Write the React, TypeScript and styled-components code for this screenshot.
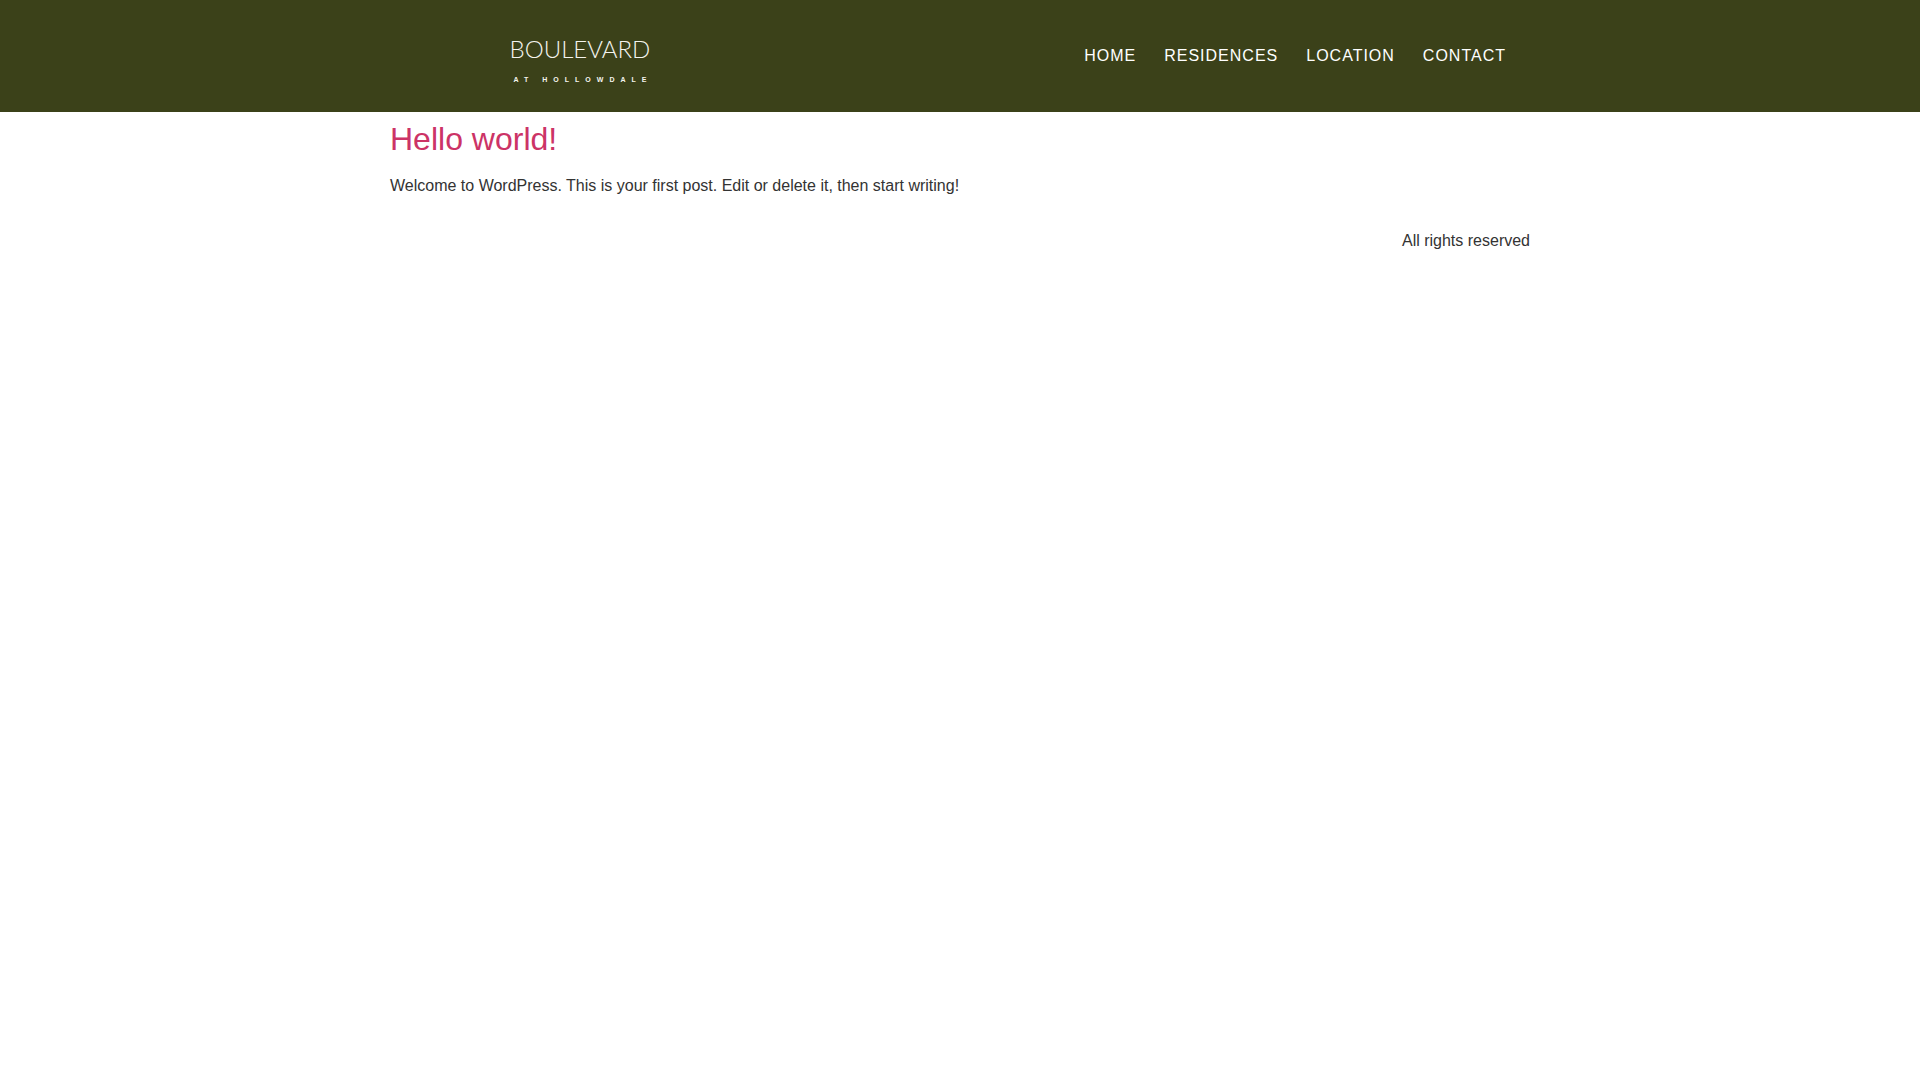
import React from "react";
import styled, { createGlobalStyle } from "styled-components";

const GlobalStyle = createGlobalStyle`
  *, *::before, *::after { box-sizing: border-box; }
  body {
    margin: 0;
    background: #fff;
    color: #333;
    font-family: "Liberation Sans", Arial, sans-serif;
    font-size: 16px;
    line-height: 24px;
  }
`;

const Header = styled.header`
  background: #3b4119;
`;

const HeaderInner = styled.div`
  display: grid;
  grid-template-columns: 1fr 2fr;
  align-items: center;
  max-width: 1140px;
  min-height: 112px;
  margin: 0 auto;
`;

const Logo = styled.a`
  display: flex;
  flex-direction: column;
  align-items: center;
  gap: 4px;
  justify-self: center;
  color: #f4f4ee;
  text-decoration: none;
  white-space: nowrap;
`;

const LogoName = styled.span`
  font-family: Lato, "Liberation Sans", sans-serif;
  font-size: 24px;
  font-weight: 300;
  line-height: 44px;
`;

const LogoTagline = styled.span`
  padding-left: 6px;
  font-size: 7px;
  font-weight: 700;
  line-height: 10px;
  letter-spacing: 6px;
`;

const Nav = styled.nav`
  display: flex;
  flex-wrap: wrap;
  justify-content: flex-end;
  padding: 0 10px;
`;

const NavLink = styled.a`
  padding: 12px 14px;
  color: #fff;
  letter-spacing: 1px;
  line-height: 24px;
  text-decoration: none;
  text-transform: uppercase;
`;

const Main = styled.main`
  max-width: 1140px;
  margin: 0 auto;
  padding-top: 8px;
`;

const PostTitle = styled.h2`
  margin: 0 0 16px;
  font-size: 32px;
  font-weight: 500;
  line-height: 38px;
`;

const PostLink = styled.a`
  color: #cc3366;
  text-decoration: none;
`;

const Excerpt = styled.p`
  margin: 0 0 15px;
`;

const Footer = styled.footer`
  display: flex;
  justify-content: flex-end;
  max-width: 1140px;
  margin: 0 auto;
  padding: 16px 0;
`;

const links = ["Home", "Residences", "Location", "Contact"];

export default function App() {
  return (
    <>
      <GlobalStyle />
      <Header>
        <HeaderInner>
          <Logo href="#">
            <LogoName>BOULEVARD</LogoName>
            <LogoTagline>AT HOLLOWDALE</LogoTagline>
          </Logo>
          <Nav aria-label="Main">
            {links.map((label) => (
              <NavLink key={label} href={`#${label.toLowerCase()}`}>
                {label}
              </NavLink>
            ))}
          </Nav>
        </HeaderInner>
      </Header>
      <Main>
        <article>
          <PostTitle>
            <PostLink href="#hello-world">Hello world!</PostLink>
          </PostTitle>
          <Excerpt>
            Welcome to WordPress. This is your first post. Edit or delete it, then start writing!
          </Excerpt>
        </article>
      </Main>
      <Footer>All rights reserved</Footer>
    </>
  );
}
